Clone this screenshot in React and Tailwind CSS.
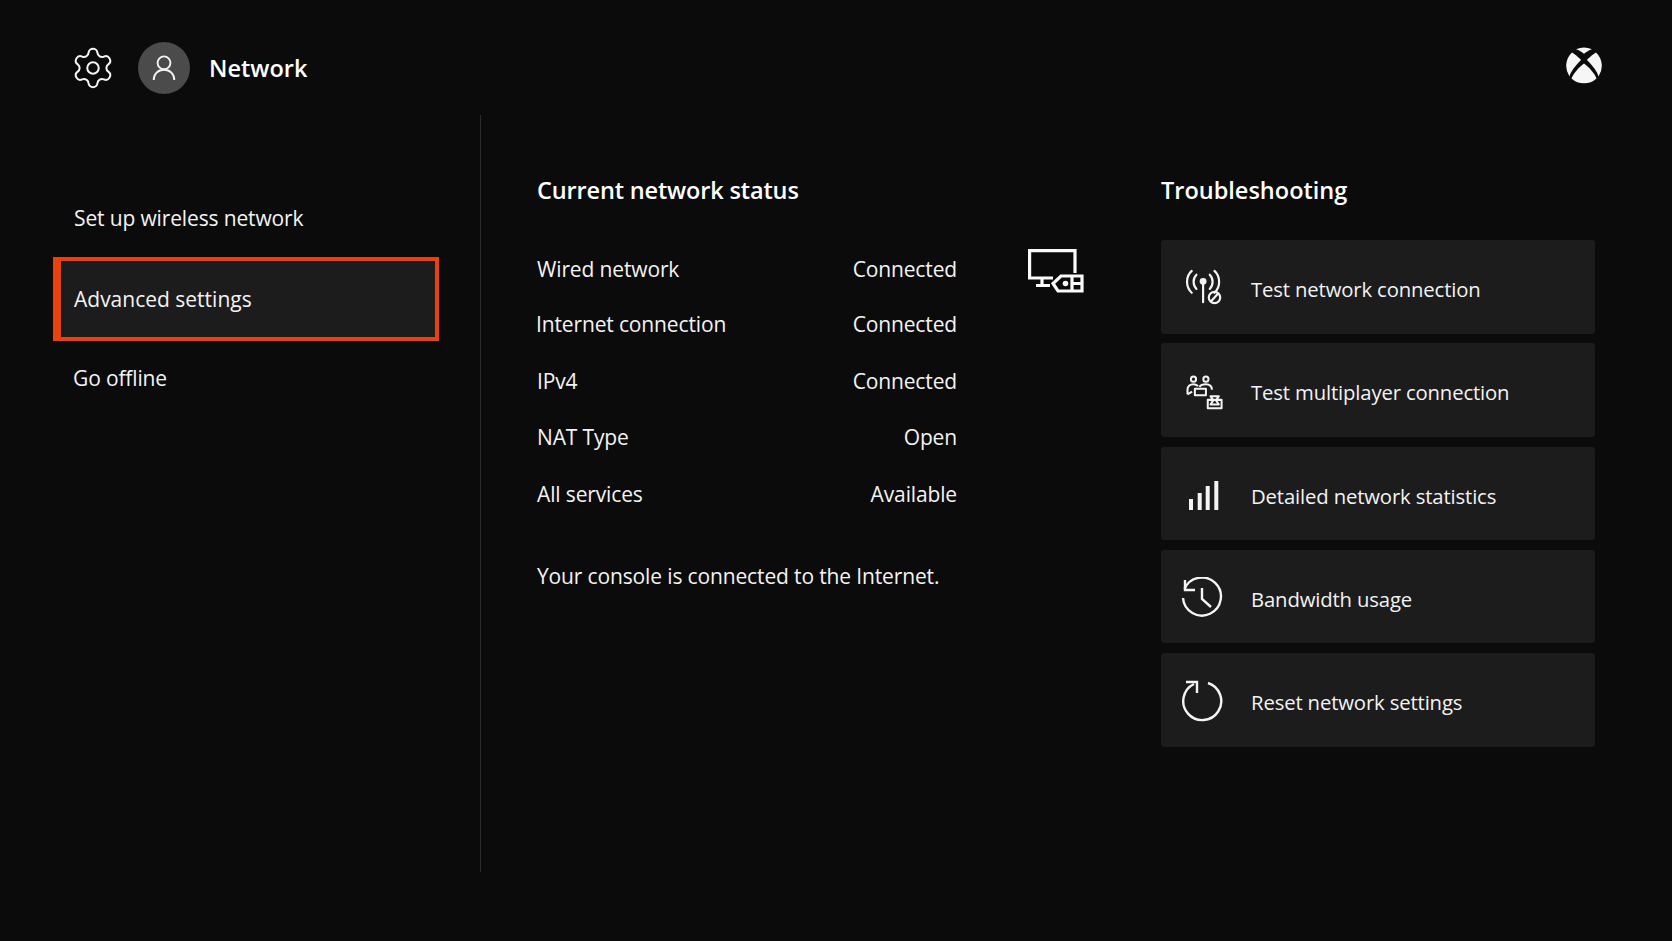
import React from "react";
import { Settings } from "lucide-react";

const Gear = () => <Settings size={46} strokeWidth={1.05} className="text-[#f4f4f4] -m-[4px]" />;

const Person = () => (
  <svg width="24" height="26" viewBox="0 0 28 30" fill="none" stroke="#f4f4f4" strokeWidth="2.200">
    <circle cx="14" cy="9" r="7.500" />
    <path d="M2 29c0-7 5-12 12-12s12 5 12 12" />
  </svg>
);

const XboxLogo = () => (
  <svg width="38" height="38" viewBox="0 0 38 38" fill="#f6f6f6">
    <path d="M19 16.500C24 20 30 27 31.500 31.500A18.500 18.500 0 0 1 6.500 31.500C8 27 14 20 19 16.500Z" />
    <path d="M7 5.500C11 8 15 11.500 16 13C10 19 5.500 25 4.500 29.500A18.500 18.500 0 0 1 7 5.500Z" />
    <path d="M31 5.500C27 8 23 11.500 22 13C28 19 32.500 25 33.500 29.500A18.500 18.500 0 0 0 31 5.500Z" />
    <path d="M11 2.300A18.500 18.500 0 0 1 27 2.300C24 3.300 21 5 19 6.800C17 5 14 3.300 11 2.300Z" />
  </svg>
);

const Monitor = () => (
  <svg width="56" height="44" viewBox="0 0 56 44" fill="none" stroke="#fafafa" strokeWidth="3.200">
    <path d="M47 24V1.600H1.600V29H25" />
    <path d="M14 29v7M8 36.500h14" />
    <path d="M54 27H33l-8 7.500 5 7.500h24z" />
    <path d="M44 27v15M44 34.500h10" />
    <circle cx="37.500" cy="34.500" r="1.200" fill="#fafafa" />
  </svg>
);

const Antenna = () => (
  <svg width="38" height="40" viewBox="0 0 40 38" fill="none" stroke="#f4f4f4" strokeWidth="2.300" strokeLinecap="round">
    <circle cx="18" cy="12" r="2.500" fill="#f4f4f4" />
    <path d="M18 13v21" />
    <path d="M11 5c-4 4-4 11 0 15M25 5c4 4 4 11 0 15" />
    <path d="M6 1c-6.500 6-6.500 17 0 23M30 1c6.500 6 6.500 17 0 23" />
    <circle cx="30" cy="29" r="6" />
    <path d="M26.500 33 33.500 25" />
  </svg>
);

const Multiplayer = () => (
  <svg width="38" height="35" viewBox="0 0 40 38" fill="none" stroke="#f4f4f4" strokeWidth="2.200" strokeLinejoin="round">
    <circle cx="7.500" cy="4.500" r="2.800" />
    <circle cx="21" cy="4.500" r="2.800" />
    <path d="M1 21v-5c0-4 3-6 6.500-6 2 0 3.500.8 5 2M14 13c1-2 4-3 7-3 4 0 6.500 2 6.500 6" />
    <path d="M1 21l5-3" />
    <path d="M9 15h12v7H9z" />
    <path d="M23 36V27h15v9zM26 23h9l-3 4.500 3 4.500h-9l3-4.500z" />
  </svg>
);

const Bars = () => (
  <svg width="30" height="30" viewBox="0 0 30 30" fill="#f4f4f4">
    <rect x="0" y="19" width="4" height="11" />
    <rect x="8.700" y="13" width="4" height="17" />
    <rect x="16.700" y="6" width="4" height="24" />
    <rect x="25.300" y="1" width="4" height="29" />
  </svg>
);

const History = () => (
  <svg width="42" height="42" viewBox="0 0 42 42" fill="none" stroke="#f4f4f4" strokeWidth="2.400">
    <path d="M3.500 12A19 19 0 1 1 2 21" />
    <path d="M4 3v10h10" />
    <path d="M21 11v11l9 8" />
  </svg>
);

const Reset = () => (
  <svg width="42" height="42" viewBox="0 0 42 42" fill="none" stroke="#f4f4f4" strokeWidth="2.400">
    <path d="M26 3a19 19 0 1 1-14 1" />
    <path d="M4 2h11v11" />
  </svg>
);

const rows = [
  ["Wired network", "Connected", "h-[55px]", "pl-0"],
  ["Internet connection", "Connected", "h-[56px]", "-ml-[1px]"],
  ["IPv4", "Connected", "h-[56.500px]", "pl-0"],
  ["NAT Type", "Open", "h-[56.500px]", "pl-0"],
  ["All services", "Available", "h-[57px]", "pl-0"],
];

const cards = [
  [<Antenna />, "Test network connection", "pl-[6px] mt-[2px]"],
  [<Multiplayer />, "Test multiplayer connection", "pl-[6px] mt-[4px]"],
  [<Bars />, "Detailed network statistics", "pl-[4px] mt-[4px]"],
  [<History />, "Bandwidth usage", "pl-0 mt-[3px]"],
  [<Reset />, "Reset network settings", "pl-[2px] mt-[2px]"],
];

export default function App() {
  return (
    <div
      className="w-full h-[941px] overflow-hidden bg-[#0b0b0c] text-[#f3f3f3] text-[21px] tracking-[-0.14px] flex flex-col"
      style={{ fontFamily: '"Open Sans", "Noto Sans", sans-serif' }}
    >
      <header className="h-[115px] pl-[74px] pr-[69px] pt-[42px] flex items-start">
        <div className="h-[52px] w-[38px] flex items-center justify-center">
          <Gear />
        </div>
        <div className="ml-[26px] w-[52px] h-[52px] rounded-full bg-[#4b4b4b] flex items-center justify-center">
          <Person />
        </div>
        <h1 className="ml-[19px] h-[52px] leading-[52px] text-[23.500px] tracking-normal font-semibold text-white">Network</h1>
        <div className="ml-auto mt-[5px]">
          <XboxLogo />
        </div>
      </header>

      <main className="flex h-[757px]">
        <nav className="w-[481px] shrink-0 border-r border-[#2c2c2d] pt-[82px] pl-[53px] pr-[41px]">
          <div className="h-[60px] pl-[21px] leading-[42px]">Set up wireless network</div>
          <div className="h-[84px] border-[4px] border-[#e8420f] bg-[#1c1c1d] flex items-center">
            <div className="h-full w-[5px] border-l-[4px] border-[#e8420f]" />
            <span className="ml-[12px] mt-[2px] tracking-normal">Advanced settings</span>
          </div>
          <div className="pl-[20px] pt-[16px] leading-[42px]">Go offline</div>
        </nav>

        <section className="w-[680px] shrink-0 pl-[56px] pt-[56px]">
          <h2 className="text-[23.500px] tracking-[-0.15px] font-semibold text-white leading-[38px] h-[71px]">Current network status</h2>
          <div className="flex">
            <div className="w-[420px] shrink-0">
              {rows.map(([k, v, h, m]) => (
                <div key={k} className={`flex items-center justify-between ${h}`}>
                  <span className={m}>{k}</span>
                  <span>{v}</span>
                </div>
              ))}
            </div>
            <div className="ml-[71px] mt-[7px] shrink-0">
              <Monitor />
            </div>
          </div>
          <p className="mt-[36.500px] leading-[32px]">Your console is connected to the Internet.</p>
        </section>

        <section className="w-[434px] shrink-0 pt-[56px]">
          <h2 className="text-[23.500px] tracking-normal font-semibold text-white leading-[38px] h-[69px]">Troubleshooting</h2>
          <div className="flex flex-col gap-[9.800px]">
            {cards.map(([icon, label, offset]) => (
              <div key={label} className="h-[93.500px] rounded-[3px] bg-[#1c1c1d] flex items-center">
                <div className={`w-[82px] flex items-center justify-center ${offset}`}>{icon}</div>
                <span className="ml-[8px] mt-[5px] text-[20.300px]">{label}</span>
              </div>
            ))}
          </div>
        </section>
      </main>
    </div>
  );
}
